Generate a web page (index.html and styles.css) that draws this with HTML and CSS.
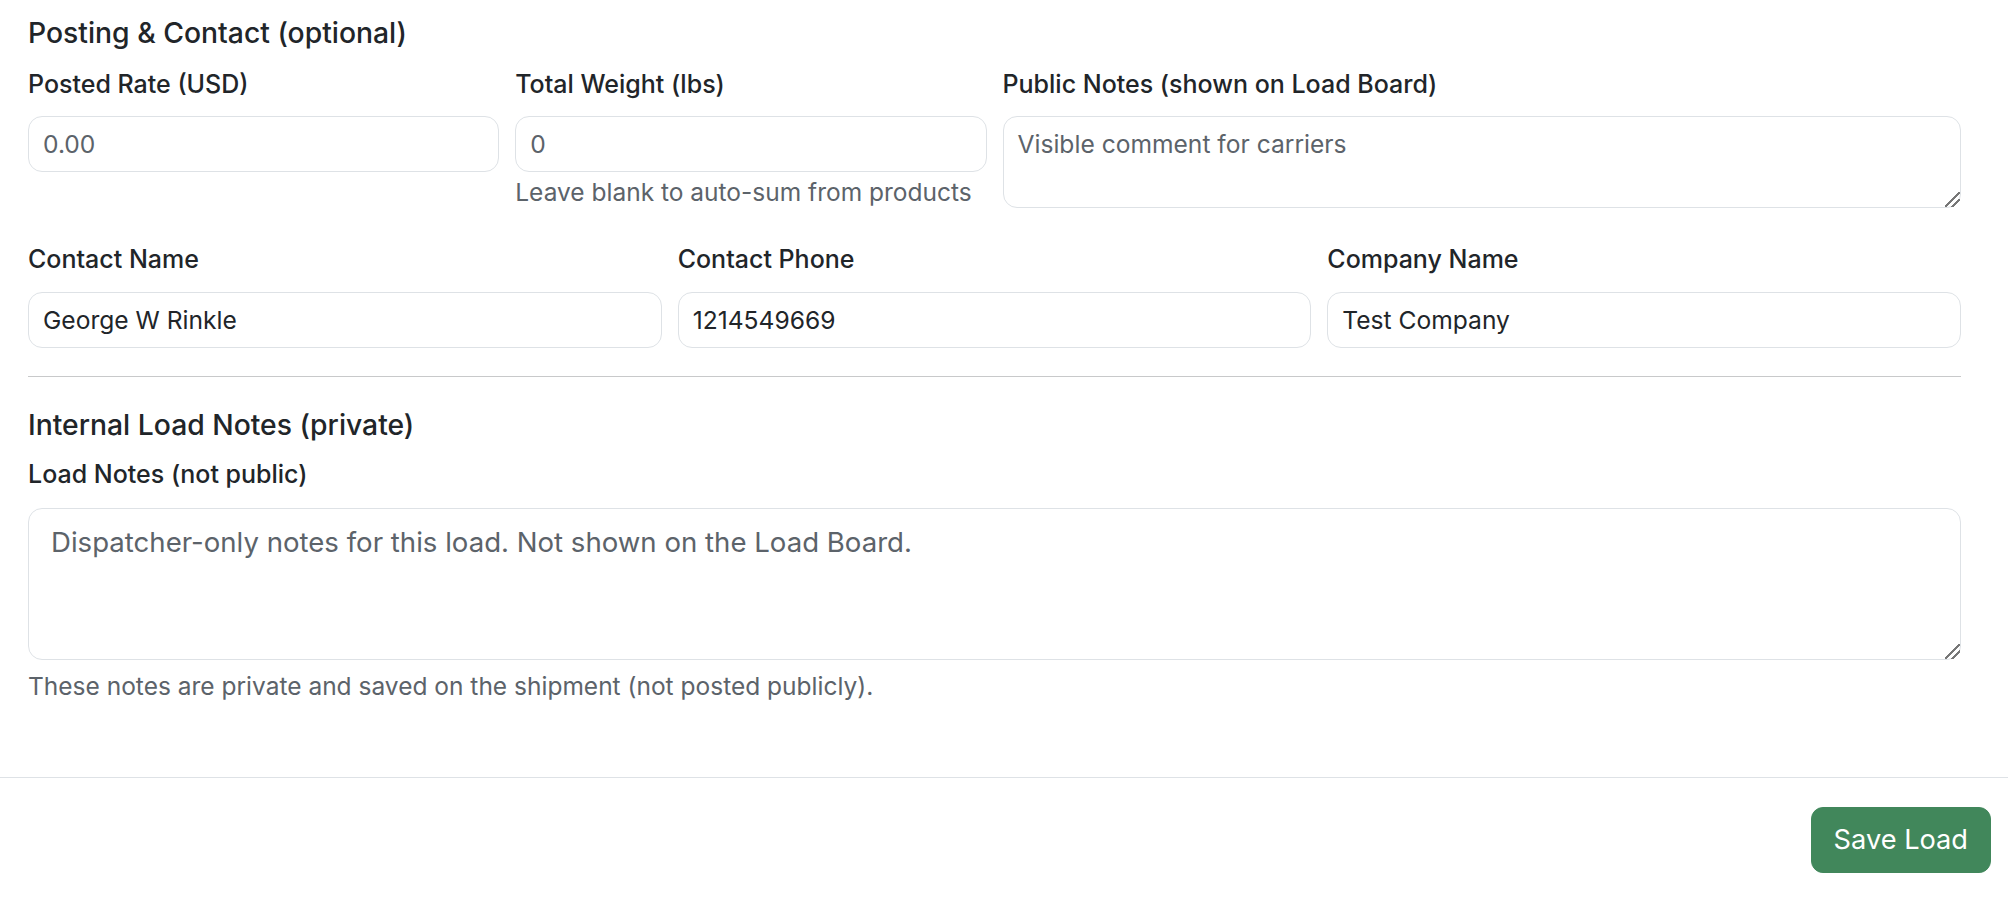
FILE: index.html
```html
<!DOCTYPE html>
<html>
<head>
<meta charset="utf-8">
<title>Save Load</title>
<link rel="stylesheet" href="styles.css">
</head>
<body>

<div class="form-body">
    <h5 class="section-title">Posting &amp; Contact (optional)</h5>

    <div class="row row-first">
        <div class="col col-3">
            <label for="rate">Posted Rate (USD)</label>
            <input type="text" id="rate" placeholder="0.00">
        </div>
        <div class="col col-3">
            <label for="weight">Total Weight (lbs)</label>
            <input type="text" id="weight" placeholder="0">
            <div class="help">Leave blank to auto-sum from products</div>
        </div>
        <div class="col col-6">
            <label for="public-notes">Public Notes (shown on Load Board)</label>
            <textarea id="public-notes" class="notes-small" placeholder="Visible comment for carriers"></textarea>
        </div>
    </div>

    <div class="row">
        <div class="col col-4">
            <label for="contact-name">Contact Name</label>
            <input type="text" id="contact-name" value="George W Rinkle">
        </div>
        <div class="col col-4">
            <label for="contact-phone">Contact Phone</label>
            <input type="text" id="contact-phone" value="1214549669">
        </div>
        <div class="col col-4">
            <label for="company">Company Name</label>
            <input type="text" id="company" value="Test Company">
        </div>
    </div>

    <hr>

    <h5 class="section-title section-private">Internal Load Notes (private)</h5>
    <div class="notes-field">
        <label for="load-notes">Load Notes (not public)</label>
        <textarea id="load-notes" class="notes-large" placeholder="Dispatcher-only notes for this load. Not shown on the Load Board."></textarea>
        <div class="help help-notes">These notes are private and saved on the shipment (not posted publicly).</div>
    </div>
</div>

<div class="form-footer">
    <button type="button" class="btn-save">Save Load</button>
</div>

</body>
</html>
```

FILE: styles.css
```css
body {
    margin: 0;
    background-color: #fff;
    color: #212529;
    font-family: Inter, "Noto Sans", "Liberation Sans", sans-serif;
}

.form-body {
    padding: 18px 47px 75px 28px;
}

.section-title {
    font-size: 28.3px;
    font-weight: 500;
    line-height: 31px;
    margin: 0 0 18px 0;
}
.section-private {
    margin-bottom: 16px;
}

.row {
    display: flex;
    margin: 0 -8px;
}
.row-first {
    margin-bottom: 34px;
}
.col {
    box-sizing: border-box;
    padding: 0 8px;
}
.col-3 { width: 25%; }
.col-4 { width: 33.3333%; }
.col-6 { width: 50%; }

label {
    display: block;
    font-size: 25px;
    font-weight: 500;
    line-height: 34px;
    margin-bottom: 15px;
}
.row-first + .row label {
    margin-bottom: 16px;
}
.notes-field label {
    margin-bottom: 17px;
}

input,
textarea {
    display: block;
    box-sizing: border-box;
    width: 100%;
    margin: 0;
    font-family: inherit;
    font-size: 24.6px;
    line-height: 36px;
    color: #212529;
    background-color: #fff;
    border: 1px solid #dee2e6;
    border-radius: 14px;
    padding: 9px 14px;
    outline: none;
}
input {
    height: 56px;
}
input::placeholder,
textarea::placeholder {
    color: #5c636a;
    opacity: 1;
}
textarea::-webkit-resizer {
    background: linear-gradient(135deg, transparent 46%, #777 46%, #777 54%, transparent 54%, transparent 70%, #777 70%, #777 78%, transparent 78%);
}

.notes-small {
    height: 92px;
}
.notes-large {
    height: 152px;
    font-size: 27.6px;
    line-height: 42px;
    padding: 12px 22px;
}

.help {
    margin-top: 5px;
    font-size: 24.5px;
    line-height: 31px;
    color: #5c636a;
}
.help-notes {
    margin-top: 11px;
}

hr {
    border: 0;
    border-top: 1px solid #c8c9ca;
    margin: 28px 0 33px 0;
}

.form-footer {
    border-top: 1px solid #dee2e6;
    padding: 29px 17px;
    display: flex;
    justify-content: flex-end;
}

.btn-save {
    font-family: inherit;
    font-size: 27.2px;
    line-height: 42px;
    padding: 11px 22px;
    color: #fff;
    background-color: #41875b;
    border: 1px solid #41875b;
    border-radius: 12px;
}
```
